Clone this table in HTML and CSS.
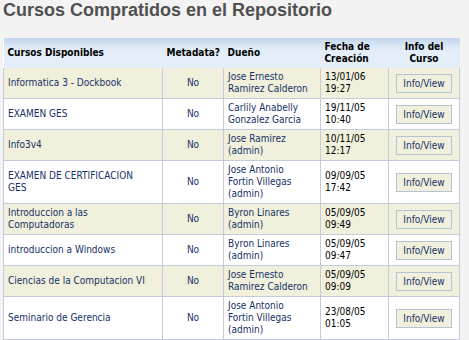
FILE: index.html
```html
<!DOCTYPE html>
<html lang="es">
<head>
<meta charset="utf-8">
<title>Cursos Compratidos en el Repositorio</title>
<link rel="stylesheet" href="styles.css">
</head>
<body>
<h1 class="title">Cursos Compratidos en el Repositorio</h1>
<table class="courses">
  <colgroup>
    <col class="c-name">
    <col class="c-meta">
    <col class="c-owner">
    <col class="c-date">
    <col class="c-info">
  </colgroup>
  <thead>
    <tr>
      <th class="left">Cursos Disponibles</th>
      <th class="center">Metadata?</th>
      <th class="left">Dueño</th>
      <th class="left">Fecha de<br>Creación</th>
      <th class="center">Info del<br>Curso</th>
    </tr>
  </thead>
  <tbody>
    <tr class="alt">
      <td><a class="course" href="#">Informatica 3 - Dockbook</a></td>
      <td class="center meta">No</td>
      <td class="owner">Jose Ernesto<br>Ramirez Calderon</td>
      <td class="date">13/01/06<br>19:27</td>
      <td class="center"><button class="info-btn" type="button">Info/View</button></td>
    </tr>
    <tr>
      <td><a class="course" href="#">EXAMEN GES</a></td>
      <td class="center meta">No</td>
      <td class="owner">Carlily Anabelly<br>Gonzalez Garcia</td>
      <td class="date">19/11/05<br>10:40</td>
      <td class="center"><button class="info-btn" type="button">Info/View</button></td>
    </tr>
    <tr class="alt">
      <td><a class="course" href="#">Info3v4</a></td>
      <td class="center meta">No</td>
      <td class="owner">Jose Ramirez<br>(admin)</td>
      <td class="date">10/11/05<br>12:17</td>
      <td class="center"><button class="info-btn" type="button">Info/View</button></td>
    </tr>
    <tr>
      <td><a class="course" href="#">EXAMEN DE CERTIFICACION<br>GES</a></td>
      <td class="center meta">No</td>
      <td class="owner">Jose Antonio<br>Fortin Villegas<br>(admin)</td>
      <td class="date">09/09/05<br>17:42</td>
      <td class="center"><button class="info-btn" type="button">Info/View</button></td>
    </tr>
    <tr class="alt">
      <td><a class="course" href="#">Introduccion a las<br>Computadoras</a></td>
      <td class="center meta">No</td>
      <td class="owner">Byron Linares<br>(admin)</td>
      <td class="date">05/09/05<br>09:49</td>
      <td class="center"><button class="info-btn" type="button">Info/View</button></td>
    </tr>
    <tr>
      <td><a class="course" href="#">introduccion a Windows</a></td>
      <td class="center meta">No</td>
      <td class="owner">Byron Linares<br>(admin)</td>
      <td class="date">05/09/05<br>09:47</td>
      <td class="center"><button class="info-btn" type="button">Info/View</button></td>
    </tr>
    <tr class="alt">
      <td><a class="course" href="#">Ciencias de la Computacion VI</a></td>
      <td class="center meta">No</td>
      <td class="owner">Jose Ernesto<br>Ramirez Calderon</td>
      <td class="date">05/09/05<br>09:09</td>
      <td class="center"><button class="info-btn" type="button">Info/View</button></td>
    </tr>
    <tr>
      <td><a class="course" href="#">Seminario de Gerencia</a></td>
      <td class="center meta">No</td>
      <td class="owner">Jose Antonio<br>Fortin Villegas<br>(admin)</td>
      <td class="date">23/08/05<br>01:05</td>
      <td class="center"><button class="info-btn" type="button">Info/View</button></td>
    </tr>
  </tbody>
</table>
</body>
</html>
```
FILE: styles.css
```css
html, body {
  margin: 0;
  background: #f3f3f3;
}
body {
  padding: 0 3px;
  font-family: "DejaVu Sans Condensed", "DejaVu Sans", sans-serif;
  font-stretch: condensed;
  font-size: 10px;
  color: #163066;
}
.title {
  margin: 0 0 17px;
  font-family: "Liberation Sans", Arial, sans-serif;
  font-stretch: normal;
  font-weight: bold;
  font-size: 18px;
  line-height: 21px;
  color: #505050;
}
.courses {
  border-collapse: collapse;
  table-layout: fixed;
  width: 456px;
  background: #ffffff;
}
.c-name { width: 159px; }
.c-meta { width: 61px; }
.c-owner { width: 97px; }
.c-date { width: 68px; }
.c-info { width: 71px; }
.courses th {
  height: 24px;
  padding: 3px 4px;
  line-height: 12px;
  font-weight: bold;
  color: #000;
  vertical-align: middle;
  background: linear-gradient(#c3d7ee 0, #dde9f6 9px, #e3eef9 14px, #e3eef9 100%);
  border: 0;
}
.courses td {
  height: 24px;
  padding: 3px 4px;
  line-height: 12px;
  vertical-align: middle;
  border-left: 1px solid #c4ccdb;
  border-right: 1px solid #c4ccdb;
  border-bottom: 1px solid #c4ccdb;
  white-space: nowrap;
}
.courses tr.alt td {
  background: #f0f0dc;
}
.left { text-align: left; }
.center { text-align: center; }
.course {
  color: #163066;
  text-decoration: none;
}
.meta, .owner { color: #163066; }
.date { color: #000; padding-left: 5px; }
.info-btn {
  box-sizing: border-box;
  width: 56px;
  height: 19px;
  margin: 0;
  padding: 0;
  border: 1px solid #b7c2d6;
  background: #f0f0dc;
  color: #163066;
  font: inherit;
  font-stretch: condensed;
  line-height: 17px;
  cursor: pointer;
}
```
